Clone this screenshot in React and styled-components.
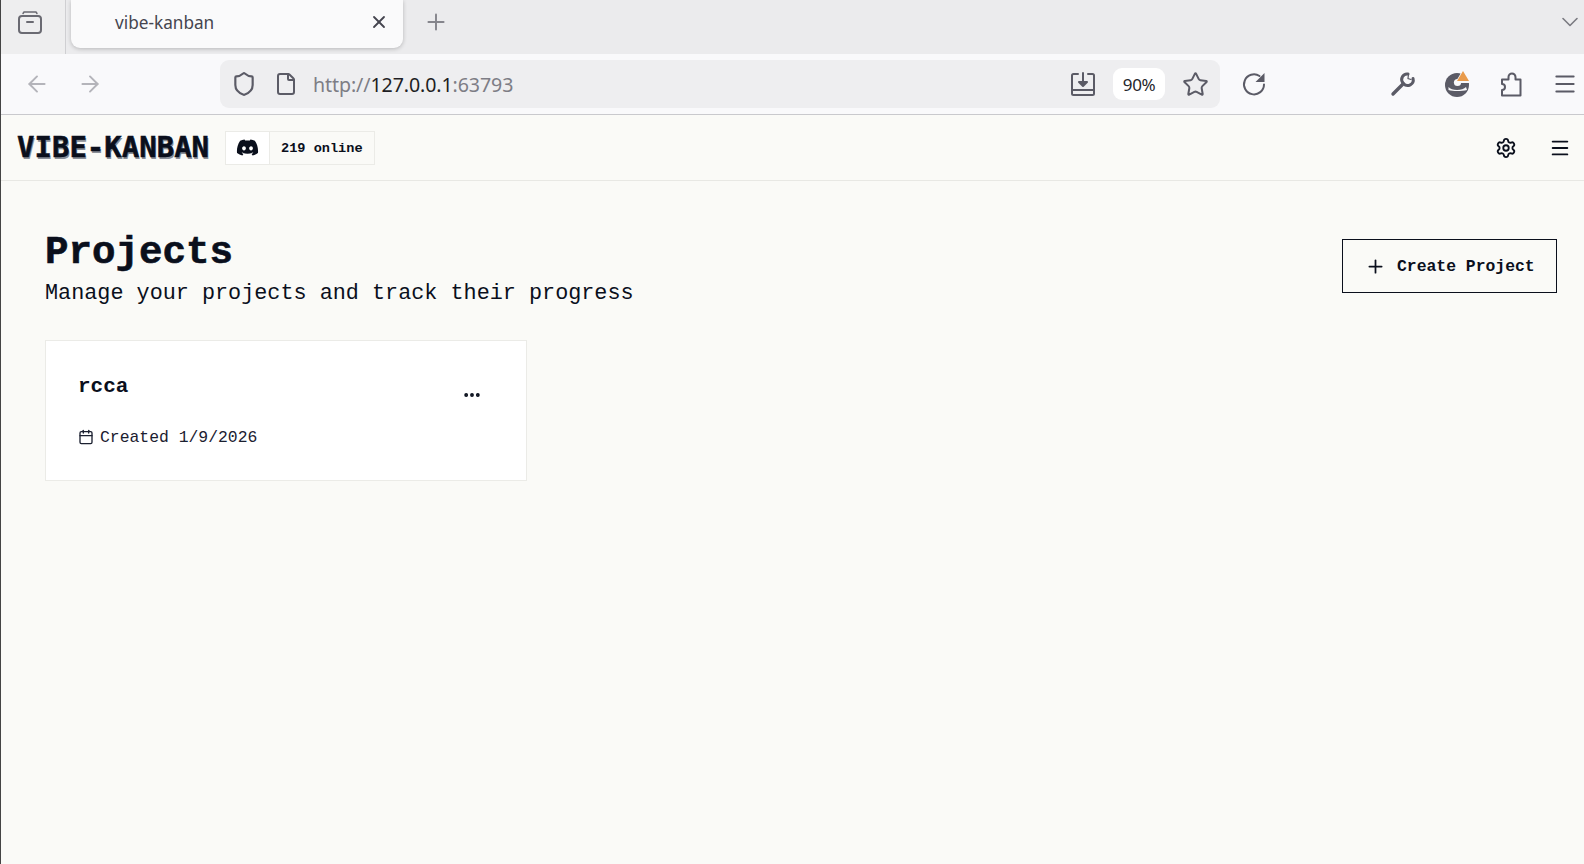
import React from "react";
import styled, { createGlobalStyle } from "styled-components";
import { ArrowLeft, ArrowRight, Shield, File, Star, Menu, Settings, Calendar, MoreHorizontal, Plus, X, ChevronDown } from "lucide-react";
import { FaDiscord } from "react-icons/fa";

const Global = createGlobalStyle`
  html, body { margin: 0; padding: 0; height: 100%; overflow: hidden; background: #fafaf7; }
  #root { height: 100%; }
  * { box-sizing: border-box; }
`;
const Mono = `"Liberation Mono", "DejaVu Sans Mono", monospace`;
const UI = `"Noto Sans", "Open Sans", sans-serif`;

const Windowed = styled.div`
  height: 864px; display: flex; flex-direction: column; border-left: 1px solid #444;
`;
const TabBar = styled.div`
  height: 54px; flex: none; background: #ebebed; display: flex; align-items: flex-start; color: #5b5b66;
`;
const SideButton = styled.div`
  width: 65px; height: 54px; flex: none; background: #eeeeef; border-right: 1px solid #cfcfd2; display: flex; align-items: center; justify-content: center; padding-bottom: 10px; padding-right: 6px; color: #6a6a72;
`;
const Tab = styled.div`
  width: 332px; height: 48px; margin-left: 5px; background: #fafafb; border-radius: 0 0 9px 9px; box-shadow: 0 1px 4px rgba(0,0,0,.22);
  display: flex; align-items: center; justify-content: space-between; padding: 0 14px 4px 44px;
  font: 17.2px ${UI}; color: #45454f;
`;
const NewTab = styled.div`
  margin-left: 20px; height: 44px; display: flex; align-items: center;
`;
const Spacer = styled.div` flex: 1; `;
const Overflow = styled.div`
  height: 44px; display: flex; align-items: center;
`;
const Toolbar = styled.div`
  height: 61px; flex: none; background: #f9f9fb; border-bottom: 1px solid #c9c9cd; display: flex; align-items: center; padding: 0 6px 0 23px; color: #5b5b66;
`;
const NavIcons = styled.div`
  width: 196px; flex: none; display: flex; gap: 27px; color: #b4b4ba;
`;
const UrlBar = styled.div`
  width: 1000px; height: 48px; flex: none; background: #eeeef0; border-radius: 9px; display: flex; align-items: center; padding: 0 11px 0 11px;
`;
const UrlIcons = styled.div`
  display: flex; gap: 17px; align-items: center; margin-right: 15px;
`;
const UrlText = styled.div`
  flex: 1; font: 19.6px ${UI}; color: #7d7d85; letter-spacing: -.1px;
  b { font-weight: 400; color: #1e1e24; }
`;
const Zoom = styled.div`
  width: 52px; height: 32px; margin: 0 17px; background: #fff; border-radius: 9px; display: flex; align-items: center; justify-content: center; font: 17px ${UI}; color: #25252b; letter-spacing: -.4px;
`;
const Reload = styled.div`
  margin-left: 21px; display: flex;
`;
const ToolIcons = styled.div`
  display: flex; align-items: center; gap: 28px;
`;
const AppHeader = styled.header`
  height: 66px; flex: none; border-bottom: 1px solid #e8e8e4; display: flex; align-items: center; padding: 0 13px 0 16px; color: #0a0f1c;
`;
const Logo = styled.div`
  width: 192px; font: 700 29px/1 "DejaVu Sans Mono", ${Mono}; color: #0a0f1c; white-space: nowrap;
  text-shadow: 1px 2px 0 #8a8f98; -webkit-text-stroke: .5px #0a0f1c;
`;
const DiscordChip = styled.div`
  margin-left: 16px; height: 34px; display: flex; align-items: stretch; border: 1px solid #ebebe7;
`;
const ChipIcon = styled.div`
  width: 44px; background: #fff; border-right: 1px solid #ebebe7; display: flex; align-items: center; justify-content: center;
`;
const ChipText = styled.div`
  width: 104px; padding: 2px 0 0 11px; display: flex; align-items: center; font: 700 13.6px ${Mono};
`;
const HeaderIcons = styled.div`
  display: flex; align-items: center; gap: 32px;
`;
const Main = styled.main`
  flex: 1; padding: 50px 27px 0 44px; color: #0a0f1c;
`;
const TitleRow = styled.div`
  display: flex; justify-content: space-between; align-items: flex-start;
`;
const Title = styled.h1`
  margin: 0; font: 700 39.2px/44px ${Mono}; -webkit-text-stroke: .6px #0a0f1c;
`;
const Subtitle = styled.p`
  margin: 5px 0 0; font: 21.8px/27px ${Mono};
`;
const CreateButton = styled.button`
  width: 215px; height: 54px; margin-top: 8px; padding: 1px 0 0 22px; background: transparent; border: 1px solid #0a0f1c; display: flex; align-items: center; gap: 11px; color: #0a0f1c; font: 700 16.4px ${Mono};
`;
const Grid = styled.div`
  margin-top: 33px; display: grid; grid-template-columns: 482px;
`;
const Card = styled.div`
  height: 141px; background: #fff; border: 1px solid #ebebe7; padding: 32px 32px 0; display: flex; flex-direction: column;
`;
const CardTop = styled.div`
  display: flex; justify-content: space-between; align-items: flex-start;
`;
const CardName = styled.div`
  font: 700 21px/28px ${Mono};
`;
const CardMenu = styled.div`
  display: flex; margin: 12px 12px 0 0;
`;
const Meta = styled.div`
  margin-top: 22px; display: flex; align-items: center; gap: 6px; font: 16.4px/22px ${Mono}; color: #1b2030;
  svg { margin-top: -2px; }
`;

const SidebarIcon = () => (
  <svg width="26" height="26" viewBox="0 0 26 26" fill="none" stroke="currentColor" strokeWidth="2" strokeLinecap="round" strokeLinejoin="round">
    <path d="M6 4.500 7 3h12l1 1.500" strokeWidth="1.500" />
    <rect x="2" y="7" width="22" height="17" rx="3" />
    <path d="M10 13h6" />
  </svg>
);
const DownloadIcon = () => (
  <svg width="26" height="26" viewBox="0 0 26 26" fill="none" stroke="currentColor" strokeWidth="2" strokeLinecap="round" strokeLinejoin="round">
    <path d="M8 3H3.500A1.500 1.500 0 0 0 2 4.500v18A1.500 1.500 0 0 0 3.500 24h19a1.500 1.500 0 0 0 1.500-1.500v-18A1.500 1.500 0 0 0 22.500 3H18" />
    <path d="M2 19h22" />
    <path d="M13 2v10" />
    <path d="M9 11h8l-4 4z" fill="currentColor" />
  </svg>
);
const ReloadIcon = () => (
  <svg width="26" height="26" viewBox="0 0 26 26" fill="none">
    <path d="M23 13.500A10 10 0 1 1 18.500 5" stroke="currentColor" strokeWidth="2" strokeLinecap="round" />
    <path d="M23.500 2v9h-9z" fill="currentColor" />
  </svg>
);
const WrenchIcon = () => (
  <svg width="26" height="26" viewBox="0 0 26 26" fill="none" stroke="currentColor" strokeLinecap="round">
    <path d="M3 23 13 13" strokeWidth="3.400" />
    <path d="M23 7.500a5.500 5.500 0 0 1-9.500 5" strokeWidth="3" />
    <path d="M13 12a5.500 5.500 0 0 1 5-9" strokeWidth="3" />
    <path d="M18.500 3 18 7.500l3 1" strokeWidth="1.200" />
  </svg>
);
const AccountIcon = () => (
  <svg width="26" height="26" viewBox="0 0 26 26">
    <circle cx="13" cy="14" r="12" fill="#5b5b66" />
    <circle cx="13.500" cy="11.500" r="3.600" fill="#f9f9fb" />
    <path d="M4.500 16c3 4 14 4 17.500 0l1 3c-4.500 1.200-14 1.500-18.500 0z" fill="#f9f9fb" />
    <path d="M19 -1.500 27 12H11z" fill="#f9f9fb" />
    <path d="M19 0l6 10H13z" fill="#e99b4c" />
  </svg>
);
const PuzzleIcon = () => (
  <svg width="26" height="26" viewBox="0 0 26 26" fill="none" stroke="currentColor" strokeWidth="2" strokeLinejoin="round">
    <path d="M4 24.500v-5.500a3 3 0 0 0 0-6V8.500h6.500V6a3.500 3.500 0 0 1 7 0v2.500h5v16z" />
  </svg>
);

export default function App() {
  return (
    <Windowed>
      <Global />
      <TabBar>
        <SideButton><SidebarIcon /></SideButton>
        <Tab>
          <span>vibe-kanban</span>
          <X size={20} strokeWidth={2.2} />
        </Tab>
        <NewTab><Plus size={26} strokeWidth={1.8} color="#85858c" /></NewTab>
        <Spacer />
        <Overflow><ChevronDown size={28} strokeWidth={1.4} color="#7b7b82" /></Overflow>
      </TabBar>
      <Toolbar>
        <NavIcons>
          <ArrowLeft size={26} strokeWidth={1.8} />
          <ArrowRight size={26} strokeWidth={1.8} />
        </NavIcons>
        <UrlBar>
          <UrlIcons>
            <Shield size={26} strokeWidth={2} />
            <File size={24} strokeWidth={2} />
          </UrlIcons>
          <UrlText>http://<b>127.0.0.1</b>:63793</UrlText>
          <DownloadIcon />
          <Zoom>90%</Zoom>
          <Star size={27} strokeWidth={1.8} />
        </UrlBar>
        <Reload><ReloadIcon /></Reload>
        <Spacer />
        <ToolIcons>
          <WrenchIcon />
          <AccountIcon />
          <PuzzleIcon />
          <Menu size={26} strokeWidth={1.8} />
        </ToolIcons>
      </Toolbar>
      <AppHeader>
        <Logo>VIBE-KANBAN</Logo>
        <DiscordChip>
          <ChipIcon><FaDiscord size={23} /></ChipIcon>
          <ChipText>219 online</ChipText>
        </DiscordChip>
        <Spacer />
        <HeaderIcons>
          <Settings size={22} strokeWidth={2} />
          <Menu size={22} strokeWidth={2} />
        </HeaderIcons>
      </AppHeader>
      <Main>
        <TitleRow>
          <div>
            <Title>Projects</Title>
            <Subtitle>Manage your projects and track their progress</Subtitle>
          </div>
          <CreateButton><Plus size={21} strokeWidth={2} />Create Project</CreateButton>
        </TitleRow>
        <Grid>
          <Card>
            <CardTop>
              <CardName>rcca</CardName>
              <CardMenu><MoreHorizontal size={20} strokeWidth={2.6} /></CardMenu>
            </CardTop>
            <Meta><Calendar size={16} strokeWidth={2} />Created 1/9/2026</Meta>
          </Card>
        </Grid>
      </Main>
    </Windowed>
  );
}
